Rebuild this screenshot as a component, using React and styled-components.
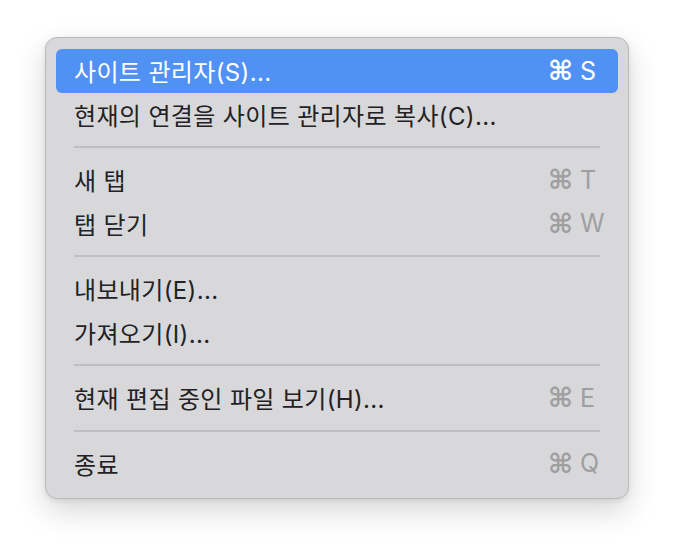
import React from "react";
import styled, { createGlobalStyle } from "styled-components";

const Global = createGlobalStyle`
  html, body {
    margin: 0;
    padding: 0;
    background: #ffffff;
  }
  body {
    font-family: "Inter", "Noto Sans CJK KR", "DejaVu Sans", sans-serif;
    -webkit-font-smoothing: antialiased;
  }
`;

const Page = styled.div`
  width: 674px;
  height: 552px;
  padding: 37px 0 0 45px;
  box-sizing: border-box;
`;

const Menu = styled.div`
  width: 584px;
  height: 462px;
  box-sizing: border-box;
  padding: 11px 10px 10px;
  background: #d8d8da;
  border: 1px solid #b9b9bb;
  border-radius: 12px;
  box-shadow: 0 12px 30px rgba(0, 0, 0, 0.16), 0 2px 6px rgba(0, 0, 0, 0.08);
  display: flex;
  flex-direction: column;
`;

const Item = styled.div`
  height: 43.5px;
  display: flex;
  align-items: center;
  justify-content: space-between;
  padding: 0 17px 0 18px;
  border-radius: 6px;
  font-size: 24px;
  letter-spacing: 0.35px;
  color: ${(p) => (p.active ? "#ffffff" : "#222224")};
  background: ${(p) => (p.active ? "#5191f4" : "transparent")};
`;

const Shortcut = styled.span`
  width: 53px;
  display: flex;
  align-items: center;
  gap: 7px;
  color: ${(p) => (p.active ? "#ffffff" : "#9f9fa1")};
  font-size: 25px;
  letter-spacing: 0;
`;

const Cmd = styled.span`
  font-family: "DejaVu Sans", sans-serif;
  font-size: 27px;
  font-weight: bold;
  line-height: 1;
`;

const Separator = styled.div`
  height: 22px;
  display: flex;
  align-items: center;
  padding: 0 18px;
  &::after {
    content: "";
    flex: 1;
    height: 2px;
    background: #bfbfc1;
  }
`;

const items = [
  { label: "사이트 관리자(S)...", key: "S", active: true },
  { label: "현재의 연결을 사이트 관리자로 복사(C)..." },
  "sep",
  { label: "새 탭", key: "T" },
  { label: "탭 닫기", key: "W" },
  "sep",
  { label: "내보내기(E)..." },
  { label: "가져오기(I)..." },
  "sep",
  { label: "현재 편집 중인 파일 보기(H)...", key: "E" },
  "sep",
  { label: "종료", key: "Q" },
];

export default function App() {
  return (
    <Page>
      <Global />
      <Menu>
        {items.map((it, i) =>
          it === "sep" ? (
            <Separator key={i} />
          ) : (
            <Item key={i} active={it.active}>
              <span>{it.label}</span>
              {it.key && (
                <Shortcut active={it.active}>
                  <Cmd>⌘</Cmd>
                  {it.key}
                </Shortcut>
              )}
            </Item>
          )
        )}
      </Menu>
    </Page>
  );
}
